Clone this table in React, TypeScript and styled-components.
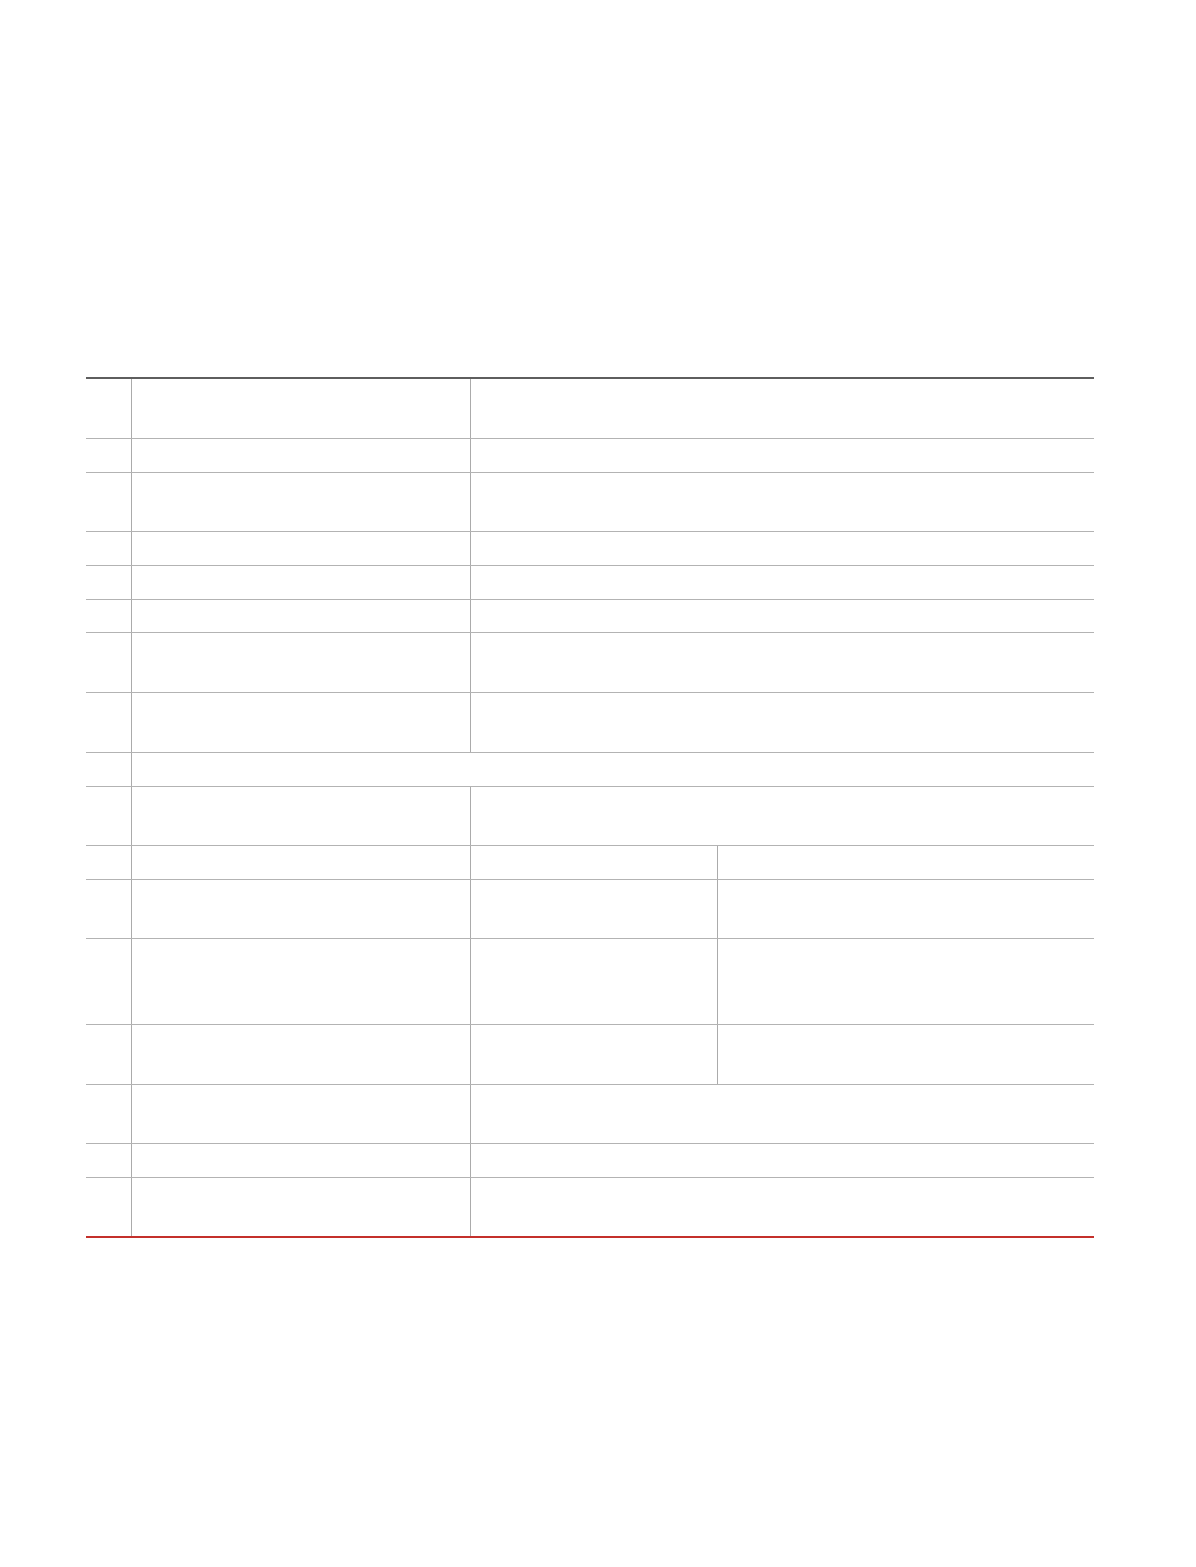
import React from "react";
import styled, { createGlobalStyle } from "styled-components";

const GlobalStyle = createGlobalStyle`
  html, body {
    margin: 0;
    padding: 0;
    background: #fff;
    font-family: "Liberation Sans", Arial, sans-serif;
  }
`;

type Row = { height: number; spans: number[] };

const columns = [45, 339, 247, 377];

const rows: Row[] = [
  { height: 60, spans: [1, 1, 2] },
  { height: 34, spans: [1, 1, 2] },
  { height: 59, spans: [1, 1, 2] },
  { height: 34, spans: [1, 1, 2] },
  { height: 34, spans: [1, 1, 2] },
  { height: 33, spans: [1, 1, 2] },
  { height: 60, spans: [1, 1, 2] },
  { height: 60, spans: [1, 1, 2] },
  { height: 34, spans: [1, 3] },
  { height: 59, spans: [1, 1, 2] },
  { height: 34, spans: [1, 1, 1, 1] },
  { height: 59, spans: [1, 1, 1, 1] },
  { height: 86, spans: [1, 1, 1, 1] },
  { height: 60, spans: [1, 1, 1, 1] },
  { height: 59, spans: [1, 1, 2] },
  { height: 34, spans: [1, 1, 2] },
  { height: 60, spans: [1, 1, 2] },
];

const App = () => {
  return (
    <>
      <GlobalStyle />
      <Page>
        <Table>
          <colgroup>
            {columns.map((w, i) => (
              <Col key={i} $width={w} />
            ))}
          </colgroup>
          <tbody>
            {rows.map((row, i) => (
              <Tr key={i} $height={row.height} $last={i === rows.length - 1}>
                {row.spans.map((span, j) => (
                  <Td key={j} colSpan={span} $first={j === 0} />
                ))}
              </Tr>
            ))}
          </tbody>
        </Table>
      </Page>
    </>
  );
};

export default App;

const Page = styled.div`
  padding: 377px 102px 330px 86px;
`;

const Table = styled.table`
  width: 1008px;
  table-layout: fixed;
  border-collapse: collapse;
  border-top: 2px solid #5e5e5e;
`;

const Col = styled.col<{ $width: number }>`
  width: ${(p) => p.$width}px;
`;

const Tr = styled.tr<{ $height: number; $last: boolean }>`
  height: ${(p) => p.$height}px;

  td {
    border-bottom: ${(p) => (p.$last ? "2px solid #c4302b" : "1px solid #b3b3b3")};
  }
`;

const Td = styled.td<{ $first: boolean }>`
  padding: 0;
  border-left: ${(p) => (p.$first ? "none" : "1px solid #ababab")};
`;
